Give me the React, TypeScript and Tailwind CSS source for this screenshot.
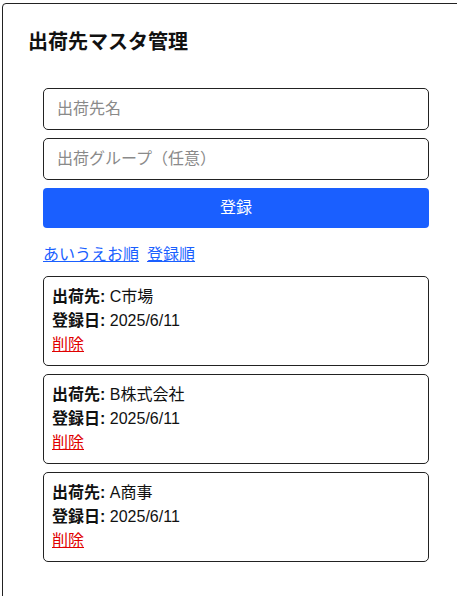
const items = [
  { name: "C市場", date: "2025/6/11" },
  { name: "B株式会社", date: "2025/6/11" },
  { name: "A商事", date: "2025/6/11" },
];

export default function App() {
  return (
    <div
      className="h-[596px] w-[457px] overflow-hidden bg-white text-[#111]"
      style={{ fontFamily: '"Liberation Sans", "Noto Sans CJK JP", sans-serif' }}
    >
      <div className="ml-[2px] mt-[3px] h-[700px] w-[500px] rounded-[4px] border border-[#222] px-[25px] pt-6">
        <h2 className="text-xl font-bold leading-7">出荷先マスタ管理</h2>
        <div className="ml-[15px] mt-8 flex w-[386px] flex-col gap-2">
          <input
            className="h-[42px] rounded-[5px] border border-[#222] px-[13px] text-base placeholder:text-[#8a8a8a] outline-none"
            placeholder="出荷先名"
          />
          <input
            className="h-[42px] rounded-[5px] border border-[#222] px-[13px] text-base placeholder:text-[#8a8a8a] outline-none"
            placeholder="出荷グループ（任意）"
          />
          <button className="h-10 rounded-[4px] bg-[#1a5fff] text-base text-white">登録</button>
          <div className="mt-[7px] flex gap-2 text-base leading-6">
            <a className="cursor-pointer text-[#1a5fff] underline">あいうえお順</a>
            <a className="cursor-pointer text-[#1a5fff] underline">登録順</a>
          </div>
          <div className="mt-[1px] flex flex-col gap-2">
            {items.map((item, i) => (
              <div key={i} className="rounded-[5px] border border-[#222] p-2 text-base leading-6">
                <div>
                  <span className="font-bold">出荷先:</span> {item.name}
                </div>
                <div>
                  <span className="font-bold">登録日:</span> {item.date}
                </div>
                <a className="cursor-pointer text-[#e00000] underline">削除</a>
              </div>
            ))}
          </div>
        </div>
      </div>
    </div>
  );
}
